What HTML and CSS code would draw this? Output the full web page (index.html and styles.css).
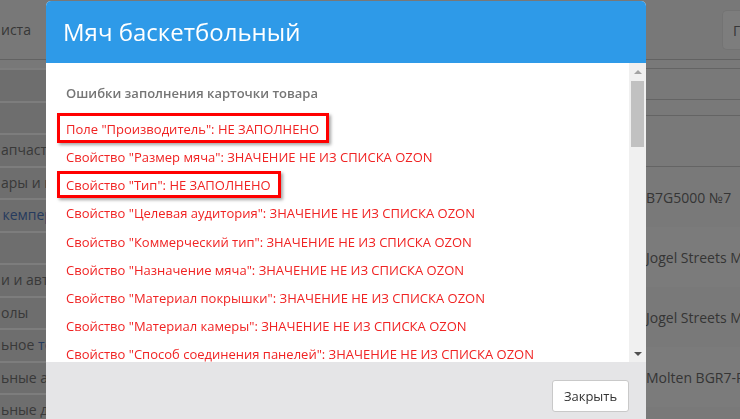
FILE: index.html
```html
<!DOCTYPE html>
<html lang="ru">
<head>
<meta charset="utf-8">
<title>Мяч баскетбольный</title>
<link rel="stylesheet" href="styles.css">
</head>
<body>
<div class="page">
  <header class="topbar">
    <nav class="topnav">
      <span class="topnav-item">иста</span>
      <span class="topnav-item">Заказы</span>
    </nav>
    <button class="top-btn">Готово</button>
  </header>
  <div class="layout">
    <aside class="sidebar">
      <ul class="side-list">
        <li class="side-item"></li>
        <li class="side-item"></li>
        <li class="side-item">апчасти</li>
        <li class="side-item">ары и продукты</li>
        <li class="side-item link">&#8202;кемпер</li>
        <li class="side-item"></li>
        <li class="side-item">и и автотовары</li>
        <li class="side-item">олы</li>
        <li class="side-item">ьное <span class="link">тов</span></li>
        <li class="side-item">ьные аналоги</li>
        <li class="side-item">ьные доски</li>
      </ul>
    </aside>
    <main class="content">
      <div class="bar bar-a"></div>
      <div class="bar bar-b"></div>
      <div class="bar bar-c"></div>
      <div class="thead"></div>
      <div class="row"><span class="cell-pad"></span><span class="cell">B7G5000 №7</span></div>
      <div class="row alt"><span class="cell-pad"></span><span class="cell">Jogel Streets MVP</span></div>
      <div class="row"><span class="cell-pad"></span><span class="cell">Jogel Streets MVP</span></div>
      <div class="row alt"><span class="cell-pad"></span><span class="cell">Molten BGR7-RW</span></div>
    </main>
  </div>
</div>

<div class="backdrop"></div>

<div class="modal">
  <div class="modal-header">
    <h2 class="modal-title">Мяч баскетбольный</h2>
  </div>
  <div class="modal-body">
    <div class="modal-scroll">
      <h3 class="errors-title">Ошибки заполнения карточки товара</h3>
      <ul class="errors">
        <li class="error"><span class="mark mark-1">Поле "Производитель": НЕ ЗАПОЛНЕНО</span></li>
        <li class="error">Свойство "Размер мяча": ЗНАЧЕНИЕ НЕ ИЗ СПИСКА OZON</li>
        <li class="error"><span class="mark mark-2">Свойство "Тип": НЕ ЗАПОЛНЕНО</span></li>
        <li class="error">Свойство "Целевая аудитория": ЗНАЧЕНИЕ НЕ ИЗ СПИСКА OZON</li>
        <li class="error">Свойство "Коммерческий тип": ЗНАЧЕНИЕ НЕ ИЗ СПИСКА OZON</li>
        <li class="error">Свойство "Назначение мяча": ЗНАЧЕНИЕ НЕ ИЗ СПИСКА OZON</li>
        <li class="error">Свойство "Материал покрышки": ЗНАЧЕНИЕ НЕ ИЗ СПИСКА OZON</li>
        <li class="error">Свойство "Материал камеры": ЗНАЧЕНИЕ НЕ ИЗ СПИСКА OZON</li>
        <li class="error">Свойство "Способ соединения панелей": ЗНАЧЕНИЕ НЕ ИЗ СПИСКА OZON</li>
        <li class="error">Свойство "Цвет товара": ЗНАЧЕНИЕ НЕ ИЗ СПИСКА OZON</li>
        <li class="error">Свойство "Страна-изготовитель": НЕ ЗАПОЛНЕНО</li>
      </ul>
    </div>
    <div class="scrollbar">
      <span class="sb-btn"><span class="arrow arrow-up"></span></span>
      <span class="sb-thumb"></span>
      <span class="sb-track"></span>
      <span class="sb-btn"><span class="arrow arrow-down"></span></span>
    </div>
  </div>
  <div class="modal-footer">
    <button class="btn-close">Закрыть</button>
  </div>
</div>
</body>
</html>
```

FILE: styles.css
```css
* { box-sizing: border-box; }

html, body {
  margin: 0;
  padding: 0;
  width: 740px;
  height: 419px;
  overflow: hidden;
}

body {
  font-family: "Open Sans", "Liberation Sans", sans-serif;
  font-size: 14px;
  background: #f3f3f3;
  color: #6b6b6b;
}

/* ---------- background page ---------- */
.page {
  width: 740px;
  overflow: hidden;
}

.topbar {
  height: 60px;
  display: flex;
  align-items: center;
  justify-content: space-between;
  border-bottom: 1px solid #c4c4c4;
  background: #f1f1f1;
}

.topnav {
  display: flex;
  gap: 19px;
  padding-left: 1px;
}

.topnav-item {
  font-size: 14px;
  color: #6e6e6e;
}

.top-btn {
  align-self: flex-start;
  flex: none;
  margin-top: 10px;
  height: 40px;
  width: 18px;
  overflow: hidden;
  white-space: nowrap;
  border: 1px solid #e6e6e6;
  border-right: 0;
  border-radius: 5px 0 0 5px;
  background: #fafafa;
  font-family: inherit;
  font-size: 14px;
  color: #6e6e6e;
  text-align: left;
  padding: 0 0 0 10px;
}

.layout {
  display: flex;
}

.sidebar {
  width: 230px;
  flex: none;
  background: #f1f1f1;
  padding-top: 8px;
  overflow: hidden;
}

.side-list {
  list-style: none;
  margin: 0;
  padding: 0;
  border-top: 2px solid #fafafa;
}

.side-item {
  height: 32.5px;
  border-bottom: 2px solid #fafafa;
  background: #dcdcdc;
  padding-left: 1px;
  line-height: 30px;
  font-size: 14px;
  color: #727272;
  white-space: nowrap;
}

.link { color: #4d77bd; }

.content {
  flex: 1;
  min-width: 0;
  overflow: hidden;
  background: #f3f3f3;
}

.bar { border-bottom: 1px solid #c8c8c8; }
.bar-a { height: 9px; }
.bar-b { height: 31px; }
.bar-c { height: 16px; }

.thead {
  height: 51px;
  border-bottom: 1px solid #c8c8c8;
}

.row {
  display: flex;
  align-items: center;
  height: 60px;
  background: #f3f3f3;
  white-space: nowrap;
}

.row.alt { background: #f7f7f7; }

.cell-pad { width: 416px; flex: none; }

.cell {
  font-size: 14px;
  color: #6b6b6b;
}

/* ---------- backdrop ---------- */
.backdrop {
  position: fixed;
  inset: 0;
  background: rgba(0, 0, 0, 0.5);
}

/* ---------- modal ---------- */
.modal {
  position: fixed;
  left: 46px;
  top: 1px;
  width: 600px;
  border-radius: 5px;
  overflow: hidden;
  background: #fff;
}

.modal-header {
  height: 62px;
  background: #2e9ae8;
  display: flex;
  align-items: center;
  padding-left: 17px;
}

.modal-title {
  margin: 0;
  font-size: 24px;
  font-weight: 400;
  line-height: 1;
  color: #fff;
}

.modal-body {
  display: flex;
  height: 299px;
}

.modal-scroll {
  flex: 1;
  overflow: hidden;
  padding: 20px 0 0 20px;
}

.errors-title {
  margin: 0 0 12px;
  font-size: 13px;
  font-weight: 600;
  line-height: 20px;
  color: #757575;
}

.errors {
  list-style: none;
  margin: 0;
  padding: 0;
}

.error {
  height: 28.15px;
  display: flex;
  align-items: center;
  font-size: 13px;
  line-height: 18px;
  color: #f02323;
  white-space: nowrap;
}

.mark {
  position: relative;
  display: inline-block;
  line-height: 18px;
}

.mark::after {
  content: "";
  position: absolute;
  border: 3px solid #ff0000;
  box-shadow: 2px 2px 3px rgba(0, 0, 0, 0.35);
}

.mark-1::after { left: -9px; right: -10px; top: -7px; bottom: -5px; }
.mark-2::after { left: -9px; right: -10px; top: -5px; bottom: -4px; }

/* fake scrollbar */
.scrollbar {
  width: 17px;
  flex: none;
  background: #f0f0f0;
  display: flex;
  flex-direction: column;
  align-items: center;
}

.sb-btn {
  height: 17px;
  width: 17px;
  display: flex;
  align-items: center;
  justify-content: center;
  flex: none;
}

.arrow {
  width: 0;
  height: 0;
  border-left: 4px solid transparent;
  border-right: 4px solid transparent;
}

.arrow-up { border-bottom: 4px solid #a3a3a3; margin-top: 1px; }
.arrow-down { border-top: 4px solid #505050; }

.sb-thumb {
  width: 13px;
  height: 66px;
  margin-top: 1px;
  background: #c1c1c1;
  flex: none;
}

.sb-track { flex: 1; }

.modal-footer {
  height: 68px;
  background: #e5e5e7;
  display: flex;
  justify-content: flex-end;
  align-items: flex-start;
  padding: 18px 17px 0 0;
}

.btn-close {
  width: 77px;
  height: 32px;
  background: #fff;
  border: 1px solid #c9c9c9;
  border-radius: 3px;
  font-family: "Open Sans", "Liberation Sans", sans-serif;
  font-size: 13px;
  color: #333;
  padding: 0;
}
```
